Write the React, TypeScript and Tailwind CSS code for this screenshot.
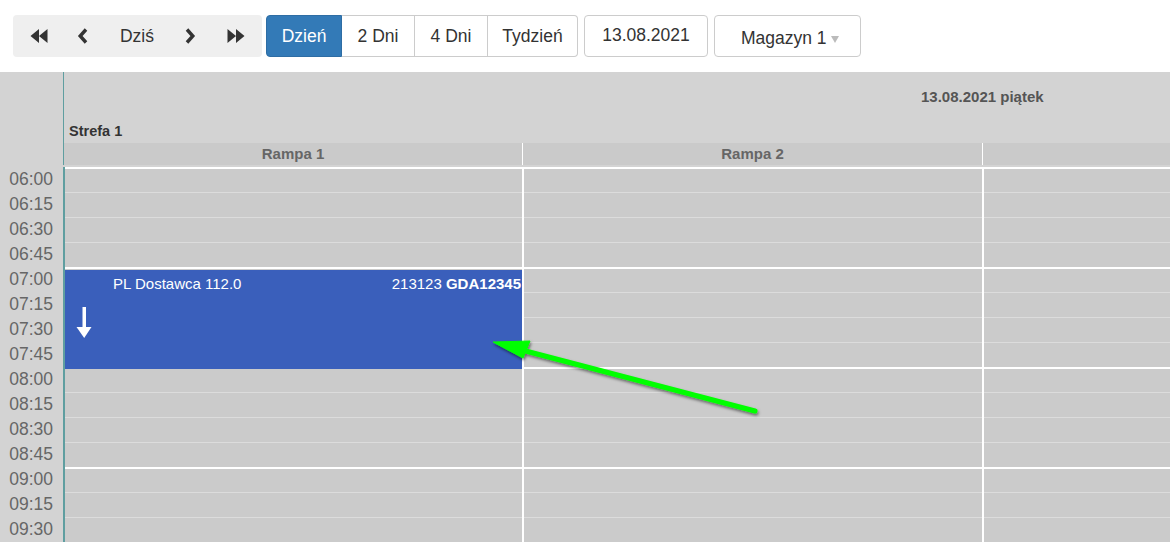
import React from 'react';

// Day view of a dock scheduler: toolbar + one-day resource grid (Rampa 1/2).
const SLOTS = [
  '06:00', '06:15', '06:30', '06:45',
  '07:00', '07:15', '07:30', '07:45',
  '08:00', '08:15', '08:30', '08:45',
  '09:00', '09:15', '09:30',
];

const COLUMNS = [
  { label: 'Rampa 1', width: 'w-[459px]' },
  { label: 'Rampa 2', width: 'w-[460px]' },
  { label: '', width: 'flex-1' },
];

function Backward() {
  return (
    <svg width="18" height="14" viewBox="0 0 18 14" aria-hidden="true">
      <path d="M9 0 L0.5 7 L9 14 Z M17.5 0 L9 7 L17.5 14 Z" fill="#333" />
    </svg>
  );
}

function Forward() {
  return (
    <svg width="18" height="14" viewBox="0 0 18 14" aria-hidden="true">
      <path d="M0.5 0 L9 7 L0.5 14 Z M9 0 L17.5 7 L9 14 Z" fill="#333" />
    </svg>
  );
}

function Chevron({ dir }: { dir: 'left' | 'right' }) {
  return (
    <svg width="12" height="16" viewBox="0 0 12 16" aria-hidden="true">
      <path
        d={dir === 'left' ? 'M9 1.5 L3.2 8 L9 14.5' : 'M3 1.5 L8.8 8 L3 14.5'}
        fill="none"
        stroke="#333"
        strokeWidth="3.4"
      />
    </svg>
  );
}

function Toolbar() {
  return (
    <div className="flex h-[72px] items-start pl-[13px] pt-[15px] text-[17.5px] text-[#333]">
      <div className="flex h-[42px] items-center rounded-[4px] bg-[#efefef]">
        <span className="flex w-[50px] justify-center pl-[1px]"><Backward /></span>
        <span className="flex w-[40px] justify-center"><Chevron dir="left" /></span>
        <span className="flex w-[68px] justify-center">Dziś</span>
        <span className="flex w-[38px] justify-center"><Chevron dir="right" /></span>
        <span className="flex w-[53px] justify-center"><Forward /></span>
      </div>
      <div className="ml-[4px] flex h-[42px]">
        <span className="flex w-[76px] items-center justify-center rounded-l-[4px] border border-[#2e6da4] bg-[#337ab7] text-white">
          Dzień
        </span>
        <span className="flex w-[73px] items-center justify-center border-y border-r border-[#ccc] bg-white">
          2 Dni
        </span>
        <span className="flex w-[73px] items-center justify-center border-y border-r border-[#ccc] bg-white">
          4 Dni
        </span>
        <span className="flex w-[90px] items-center justify-center rounded-r-[4px] border-y border-r border-[#ccc] bg-white">
          Tydzień
        </span>
      </div>
      <div className="ml-[6px] flex h-[42px] w-[124px] items-center justify-center rounded-[4px] border border-[#ccc] pb-[2px]">
        13.08.2021
      </div>
      <div className="ml-[6px] flex h-[42px] w-[147px] items-center rounded-[4px] border border-[#ccc] pl-[26px] pt-[5px]">
        Magazyn 1
        <span className="ml-[4px] mt-[1px] h-0 w-0 border-x-[4px] border-t-[7px] border-x-transparent border-t-[#bbb]" />
      </div>
    </div>
  );
}

function DownArrow() {
  return (
    <svg width="16" height="32" viewBox="0 0 16 32" aria-hidden="true">
      <rect x="6.5" y="0" width="3.5" height="23" fill="white" />
      <path d="M0.5 20 L15.5 20 L8.2 31 Z" fill="white" />
    </svg>
  );
}

function Booking() {
  return (
    <div className="absolute left-0 right-0 top-[103px] h-[99px] bg-[#3a5fbb] text-[15px] text-white">
      <div className="flex justify-between pl-[48px] pr-[1px] pt-[3px]">
        <span>PL Dostawca 112.0</span>
        <span>
          213123 <b>GDA12345</b>
        </span>
      </div>
      <div className="ml-[11px] mt-[11px]">
        <DownArrow />
      </div>
    </div>
  );
}

function Calendar() {
  return (
    <div className="flex h-[470px] overflow-hidden bg-[#d3d3d3]">
      <div className="w-[63px] shrink-0">
        <div className="h-[95px]" />
        {SLOTS.map((t) => (
          <div key={t} className="flex h-[25px] items-center justify-end pr-[10px] text-[17.5px] text-[#666]">
            {t}
          </div>
        ))}
      </div>
      <div className="flex flex-1 flex-col">
        <div className="h-[93px] border-l border-[#5f9ea0]">
          <div className="relative h-[71px]">
            <span className="absolute left-[857px] top-[14px] text-[15px] font-bold text-[#555]">
              13.08.2021 piątek
            </span>
            <span className="absolute left-[5px] top-[49px] text-[14.5px] font-bold text-[#333]">Strefa 1</span>
          </div>
          <div className="flex h-[22px] bg-[#cacaca]">
            {COLUMNS.map((c, i) => (
              <div
                key={i}
                className={`${c.width} flex items-center justify-center border-r border-white text-[15px] font-bold text-[#666] last:border-r-0`}
              >
                {c.label}
              </div>
            ))}
          </div>
        </div>
        <div className="h-[2px]" />
        <div className="flex flex-1 border-l-2 border-[#5f9ea0] bg-[#cbcbcb]">
          {COLUMNS.map((c, i) => (
            <div key={i} className={`${c.width} relative border-r-2 border-white last:border-r-0`}>
              {SLOTS.map((t, j) => (
                <div
                  key={t}
                  className={
                    j % 4 === 0
                      ? 'h-[25px] border-t-2 border-white'
                      : 'h-[25px] border-t border-[#dcdcdc]'
                  }
                />
              ))}
              {i === 0 && <Booking />}
            </div>
          ))}
        </div>
      </div>
    </div>
  );
}

// Green call-out arrow pasted over the screenshot.
function Pointer() {
  return (
    <svg className="pointer-events-none absolute left-0 top-0" width="1170" height="542" aria-hidden="true">
      <defs>
        <filter id="sh" x="-10%" y="-10%" width="120%" height="140%">
          <feDropShadow dx="1" dy="2" stdDeviation="1.5" floodColor="#000" floodOpacity="0.5" />
        </filter>
      </defs>
      <g filter="url(#sh)" fill="#00ff00" stroke="#00ff00">
        <line x1="518" y1="349" x2="755" y2="411" strokeWidth="5" strokeLinecap="round" />
        <polygon points="493,342 530,341 523,358" strokeWidth="1" />
      </g>
    </svg>
  );
}

export default function App() {
  return (
    <div className="relative h-[542px] w-[1170px] overflow-hidden bg-white font-['Liberation_Sans',Arial,sans-serif]">
      <Toolbar />
      <Calendar />
      <Pointer />
    </div>
  );
}
